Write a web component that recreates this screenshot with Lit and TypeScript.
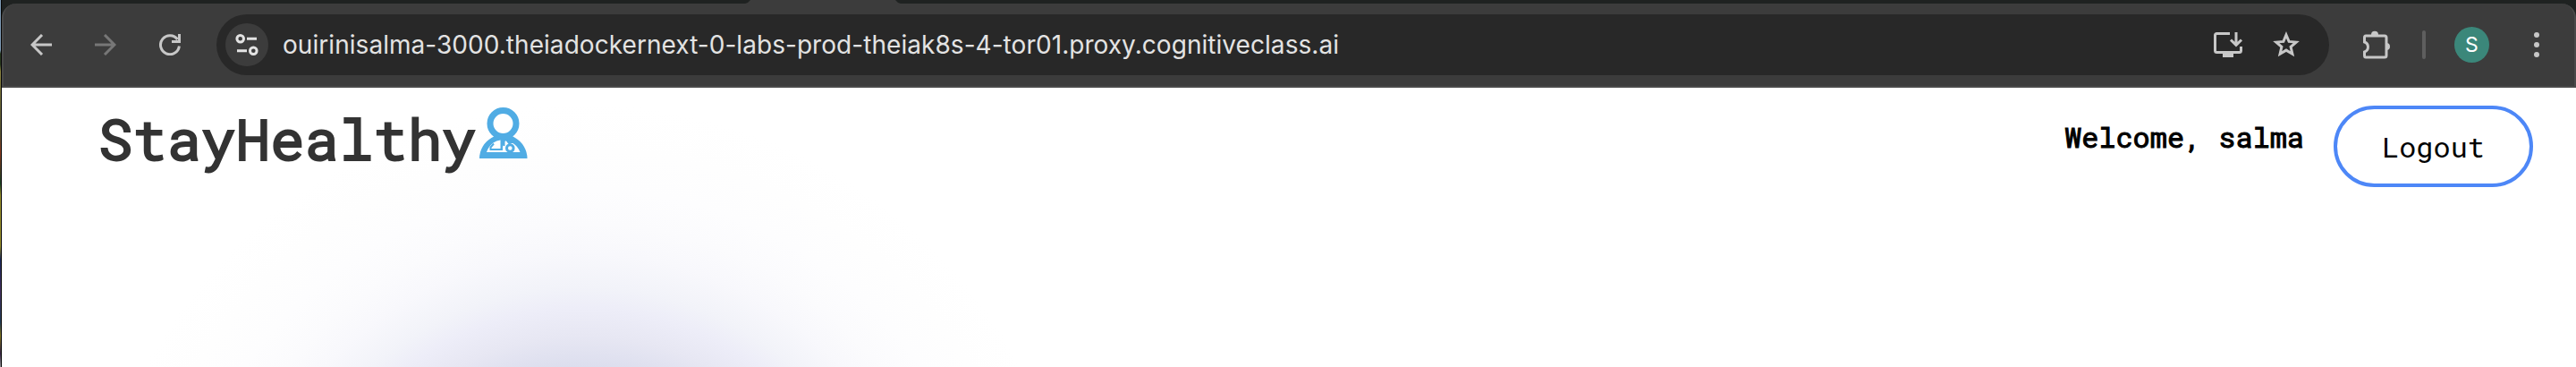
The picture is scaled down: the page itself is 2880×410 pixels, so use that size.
import { LitElement, html, css } from "lit";
import { customElement } from "lit/decorators.js";

@customElement("browser-toolbar")
class BrowserToolbar extends LitElement {
  static styles = css`
    :host { display: block; background: #1f2221; height: 98px; }
    .tabs { display: flex; justify-content: flex-start; height: 4px; padding-left: 831px; }
    .tab { display: block; width: 174px; height: 4px; }
    .bar {
      box-sizing: border-box; display: flex; align-items: center; height: 94px;
      background: #3c3c3c; border: solid #4a4a4a; border-width: 0 2px 2px;
      border-radius: 16px 16px 0 0; padding: 0 38px 0 30px;
    }
    svg { display: block; flex: none; }
    .back { margin-right: 48px; }
    .fwd { margin-right: 48px; }
    .reload { margin-right: 40px; }
    .omni {
      box-sizing: border-box; display: flex; align-items: center; width: 2362px; height: 68px;
      border-radius: 34px; background: #282828; padding: 0 32px 0 10px; flex: none;
    }
    .site { display: grid; place-items: center; width: 48px; height: 48px; border-radius: 50%; background: #3c3c3c; }
    .url {
      flex: 1; margin-left: 16px; font: 400 28px/40px Inter, sans-serif; color: #e3e3e3;
      letter-spacing: 0.05px; white-space: nowrap;
    }
    .install { margin-right: 32px; }
    .ext { margin-left: 36px; }
    .sep { width: 4px; height: 32px; border-radius: 2px; background: #5e5e5e; margin-left: 34px; }
    .avatar {
      display: grid; place-items: center; width: 40px; height: 40px; border-radius: 50%;
      background: #3b877a; color: #fff; font: 400 23px/40px Inter, sans-serif; margin: 0 49px 0 32px;
    }
  `;
  render() {
    return html`
      <div class="tabs">
        <svg class="tab" viewBox="0 0 174 4"><path d="M0 4Q4 3 6 0H168Q170 3 174 4Z" fill="#3c3c3c"/></svg>
      </div>
      <div class="bar">
        <svg class="back" width="24" height="24" viewBox="0 0 24 24" fill="none" stroke="#c7c7c7" stroke-width="3"><path d="M24 12H2.5M13 1L2 12L13 23"/></svg>
        <svg class="fwd" width="24" height="24" viewBox="0 0 24 24" fill="none" stroke="#777" stroke-width="3"><path d="M0 12H21.5M11 1L22 12L11 23"/></svg>
        <svg class="reload" width="24" height="24" viewBox="0 0 24 24" fill="none" stroke="#c7c7c7" stroke-width="3"><path d="M22.4 13.5A10.5 10.5 0 1 1 20.5 6M22.5 0V8.5H14"/></svg>
        <div class="omni">
          <div class="site">
            <svg width="26" height="26" viewBox="0 0 26 26" fill="none" stroke="#e3e3e3" stroke-width="3"><circle cx="5.7" cy="6.2" r="3.8"/><path d="M13 6.2H24M2 19.7H13"/><circle cx="20.3" cy="19.7" r="3.8"/></svg>
          </div>
          <div class="url">ouirinisalma-3000.theiadockernext-0-labs-prod-theiak8s-4-tor01.proxy.cognitiveclass.ai</div>
          <svg class="install" width="34" height="30" viewBox="0 0 34 30" fill="none" stroke="#c7c7c7" stroke-width="3"><path d="M19 2.5H4.5Q2.5 2.5 2.5 4.5V21.5Q2.5 23.5 4.5 23.5H29.5Q31.5 23.5 31.5 21.5V17M26 1V15M20 9.5L26 15.3L32 9.5"/><path d="M11 24H23V29H11Z" fill="#c7c7c7" stroke="none"/></svg>
          <svg width="32" height="32" viewBox="0 0 32 32" fill="none" stroke="#c7c7c7" stroke-width="3"><path d="M16 5L19.1 12.4L27.2 13.1L21.1 18.4L22.9 26.2L16 22.1L9.1 26.2L10.9 18.4L4.8 13.1L12.9 12.4Z"/></svg>
        </div>
        <svg class="ext" width="34" height="34" viewBox="0 0 34 34"><path d="M5 7H26Q28 7 28 9V29Q28 31 26 31H5Q3.500 31 3.500 29V25A5.800 5.800 0 0 0 3.500 14V9Q3.500 7 5 7Z" fill="none" stroke="#c7c7c7" stroke-width="3"/><path d="M11 6A3.800 4 0 0 1 19 6ZM28 15A4 4 0 0 1 28 23Z" fill="#c7c7c7"/></svg>
        <div class="sep"></div>
        <div class="avatar">S</div>
        <svg width="8" height="28" viewBox="0 0 8 28" fill="#c7c7c7"><circle cx="4" cy="3" r="3"/><circle cx="4" cy="14" r="3"/><circle cx="4" cy="25" r="3"/></svg>
      </div>`;
  }
}

@customElement("site-header")
class SiteHeader extends LitElement {
  static styles = css`
    :host {
      display: block; height: 312px; font-family: "Roboto Mono", "DejaVu Sans Mono", monospace;
      background: radial-gradient(circle at 650px 574px, #d4d6ea 230px, #dcdeee 262px, #e7e7f3 297px, #ededf8 327px, #f2f3f9 352px, #f8f8fc 389px, #fbfbfd 422px, #fdfdfe 460px, #fefefe 505px, #fff 556px) #fff;
    }
    .nav { display: flex; align-items: flex-start; padding: 20px 48px 0 108px; }
    .brand {
      display: flex; align-items: flex-start; font-size: 63.8px; line-height: 72px; color: #333;
      letter-spacing: 0.15px; -webkit-text-stroke: 2px #333;
    }
    .brand svg { display: block; margin: 2px 0 0 3px; }
    .user { display: flex; margin-left: auto; align-items: flex-start; font-size: 31.9px; line-height: 40px; color: #000; }
    .hello { margin: 15px 33px 0 0; -webkit-text-stroke: 1px #000; }
    button {
      box-sizing: border-box; width: 223px; height: 91px; border: 4px solid #4d87f7; border-radius: 46px;
      background: #fff; font: inherit; color: #000; padding: 0;
    }
  `;
  render() {
    return html`
      <div class="nav">
        <div class="brand">
          <span>StayHealthy</span>
          <svg width="54" height="58" viewBox="0 0 54 58">
            <path d="M0 57A26.700 26.700 0 0 1 13.500 34Q17 32 19 31H34.500Q37 32 40 34A26.700 26.700 0 0 1 53.500 57Z" fill="#50ace4"/>
            <circle cx="26.500" cy="18" r="14.500" fill="#fff" stroke="#50ace4" stroke-width="7"/>
            <path d="M8 50Q10.500 43 15.500 39.500Q19 37 23.500 36.500V46H18V48H24.500L28.500 37.500L30 37.500L32 40H37.500Q43 43.500 45.500 50Z" fill="#fff"/>
            <path d="M16 40.500L12.500 44.500V47H18.500M20 47H25V36M27.500 37V43" fill="none" stroke="#50ace4" stroke-width="2"/>
            <circle cx="34.300" cy="45.500" r="3.800" fill="#fff" stroke="#50ace4" stroke-width="3"/>
            <path d="M31.500 36L34.300 41" stroke="#50ace4" stroke-width="3"/>
          </svg>
        </div>
        <div class="user"><span class="hello">Welcome, salma</span><button>Logout</button></div>
      </div>`;
  }
}

@customElement("app-root")
class AppRoot extends LitElement {
  static styles = css`
    :host { display: flex; width: 2880px; height: 410px; overflow: hidden; background: #fff; }
    .desk {
      box-sizing: border-box; width: 2px; height: 410px; border-right: 1px solid #050505; flex: none;
      background: linear-gradient(#7f9bb5 0 56px, #28391f 60px 72px, #8a8440 80px, #5b5738 150px, #8f3c22 170px, #1c4527 205px, #99902c 218px 275px, #1d2c60 290px, #4a3566 325px, #24405c 360px, #877a22 375px, #3a2748 395px, #999);
    }
    .win { flex: 1; min-width: 0; }
  `;
  render() {
    return html`<div class="desk"></div><div class="win"><browser-toolbar></browser-toolbar><site-header></site-header></div>`;
  }
}
